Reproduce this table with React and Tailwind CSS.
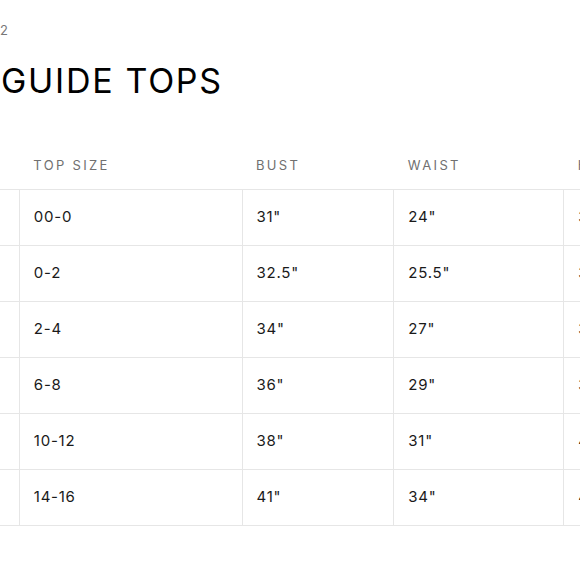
const columns = ['SIZE', 'TOP SIZE', 'BUST', 'WAIST', 'HIP']

const rows = [
  ['XXS', '00-0', '31"', '24"', '34"'],
  ['XS', '0-2', '32.5"', '25.5"', '35.5"'],
  ['S', '2-4', '34"', '27"', '37"'],
  ['M', '6-8', '36"', '29"', '39"'],
  ['L', '10-12', '38"', '31"', '41"'],
  ['XL', '14-16', '41"', '34"', '44"'],
]

// widths of each column, first one mostly off the left edge
const widths = ['w-[149px]', 'w-[223px]', 'w-[152px]', 'w-[170px]', 'w-[150px]']

export default function App() {
  return (
    <div className="w-[580px] h-[580px] overflow-hidden bg-white font-['Inter',sans-serif] text-[#111]">
      <div className="pt-[23px] text-[13px] leading-[15px] text-[#777]">2</div>

      <h1 className="mt-[23px] pl-[1px] text-[34px] leading-[40px] font-normal tracking-[0.05em] text-black">
        GUIDE TOPS
      </h1>

      <div className="mt-[42px] -ml-[130px] w-[844px]">
        <table className="table-fixed border-collapse">
          <thead>
            <tr className="h-[46px]">
              {columns.map((c, i) => (
                <th
                  key={c}
                  className={`${widths[i]} border-b border-[#e6e6e6] px-[14px] text-left align-middle text-[13px] font-normal tracking-[0.18em] text-[#707070]`}
                >
                  {c}
                </th>
              ))}
            </tr>
          </thead>
          <tbody>
            {rows.map((r) => (
              <tr key={r[1]} className="h-[56px]">
                {r.map((v, i) => (
                  <td
                    key={i}
                    className="border border-[#e6e6e6] px-[14px] text-left align-middle text-[15px] tracking-[0.05em] text-[#1a1a1a]"
                  >
                    {v}
                  </td>
                ))}
              </tr>
            ))}
          </tbody>
        </table>
      </div>
    </div>
  )
}
